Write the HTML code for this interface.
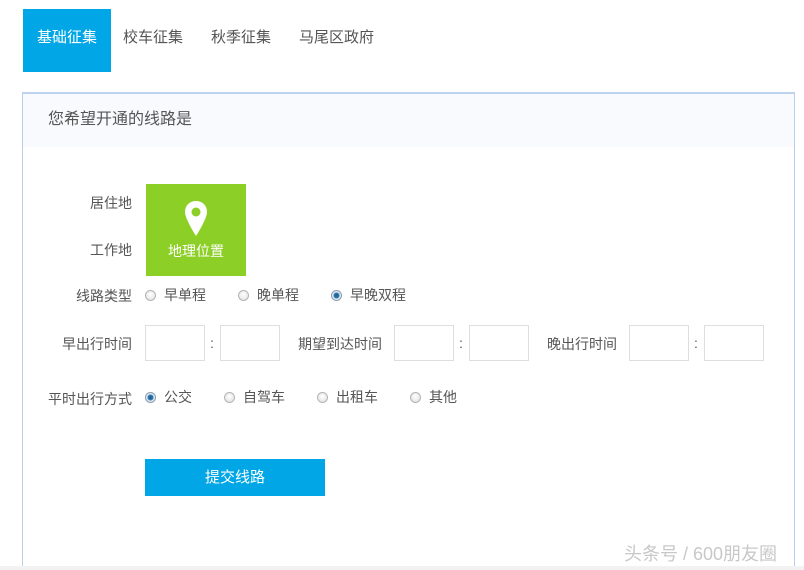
<!DOCTYPE html>
<html style="width:804px;height:570px;overflow:hidden"><head><meta charset="utf-8"><style>
*{margin:0;padding:0;box-sizing:border-box}
body{width:804px;height:570px;background:#fff;position:relative;overflow:hidden;font-family:"Liberation Sans","Noto Sans CJK SC",sans-serif;font-size:14px;color:#555}
.a{position:absolute;white-space:nowrap;line-height:1}
.tab{position:absolute;top:9px;height:63px;line-height:58px;font-size:15px;color:#555}
.panel{position:absolute;left:22px;top:92px;width:773px;height:475px;border:1px solid #b9d0ea;border-top:2px solid #bcd2ee;border-bottom:none}
.hd{position:absolute;left:0;top:0;right:0;height:53px;background:#f8fafd}
.lbl{position:absolute;text-align:right;width:120px;left:12px;line-height:1;font-size:14px;color:#555}
.inp{position:absolute;width:60px;height:36px;border:1px solid #dedede;background:#fff}
.r{position:absolute;width:11px;height:11px;border-radius:50%;border:1px solid #b4b4b4;background:radial-gradient(circle at 50% 40%,#fff,#ddd)}
.r.on{background:radial-gradient(circle,#1b5d8f 0,#2f78ad 2.5px,#e8eef4 3.5px,#dde 100%);border-color:#8a9bb0}
.rt{position:absolute;line-height:1;font-size:14px;color:#555}
</style></head><body>
<div class="tab" style="left:23px;width:88px;background:#00a6e6;color:#fff;text-align:center">基础征集</div>
<div class="tab" style="left:123px">校车征集</div>
<div class="tab" style="left:211px">秋季征集</div>
<div class="tab" style="left:299px">马尾区政府</div>
<div class="panel"><div class="hd"></div></div>
<div class="a" style="left:48px;top:112px;font-size:16px;color:#555">您希望开通的线路是</div>
<div class="lbl" style="top:196px">居住地</div>
<div class="lbl" style="top:243px">工作地</div>
<div class="a" style="left:146px;top:184px;width:100px;height:92px;background:#8ccf26"></div>
<svg class="a" style="left:183px;top:200px" width="26" height="38" viewBox="0 0 26 38"><path d="M13 1C6.5 1 2 5.8 2 12c0 7 11 24 11 24s11-17 11-24C24 5.8 19.5 1 13 1z" fill="#fff"/><circle cx="13" cy="12" r="4.5" fill="#8ccf26"/></svg>
<div class="a" style="left:146px;top:244px;width:100px;text-align:center;color:#fff;font-size:14px">地理位置</div>
<div class="lbl" style="top:289px">线路类型</div>
<div class="r" style="left:145px;top:290px"></div><div class="rt" style="left:164px;top:288px">早单程</div>
<div class="r" style="left:238px;top:290px"></div><div class="rt" style="left:257px;top:288px">晚单程</div>
<div class="r on" style="left:331px;top:290px"></div><div class="rt" style="left:350px;top:288px">早晚双程</div>
<div class="lbl" style="top:337px">早出行时间</div>
<div class="inp" style="left:145px;top:325px"></div><div class="a" style="left:210px;top:336px">:</div><div class="inp" style="left:220px;top:325px"></div>
<div class="a" style="left:298px;top:337px">期望到达时间</div>
<div class="inp" style="left:394px;top:325px"></div><div class="a" style="left:459px;top:336px">:</div><div class="inp" style="left:469px;top:325px"></div>
<div class="a" style="left:547px;top:337px">晚出行时间</div>
<div class="inp" style="left:629px;top:325px"></div><div class="a" style="left:694px;top:336px">:</div><div class="inp" style="left:704px;top:325px"></div>
<div class="lbl" style="top:392px">平时出行方式</div>
<div class="r on" style="left:145px;top:392px"></div><div class="rt" style="left:164px;top:390px">公交</div>
<div class="r" style="left:224px;top:392px"></div><div class="rt" style="left:243px;top:390px">自驾车</div>
<div class="r" style="left:317px;top:392px"></div><div class="rt" style="left:336px;top:390px">出租车</div>
<div class="r" style="left:410px;top:392px"></div><div class="rt" style="left:429px;top:390px">其他</div>
<div class="a" style="left:145px;top:459px;width:180px;height:37px;background:#00a6e6;color:#fff;text-align:center;line-height:37px;font-size:15px">提交线路</div>
<div class="a" style="left:0;top:566px;width:804px;height:4px;background:#f2f2f2"></div>
<div class="a" style="left:624px;top:545px;font-size:18px;color:#c8c8c8">头条号 / 600朋友圈</div>
</body></html>
